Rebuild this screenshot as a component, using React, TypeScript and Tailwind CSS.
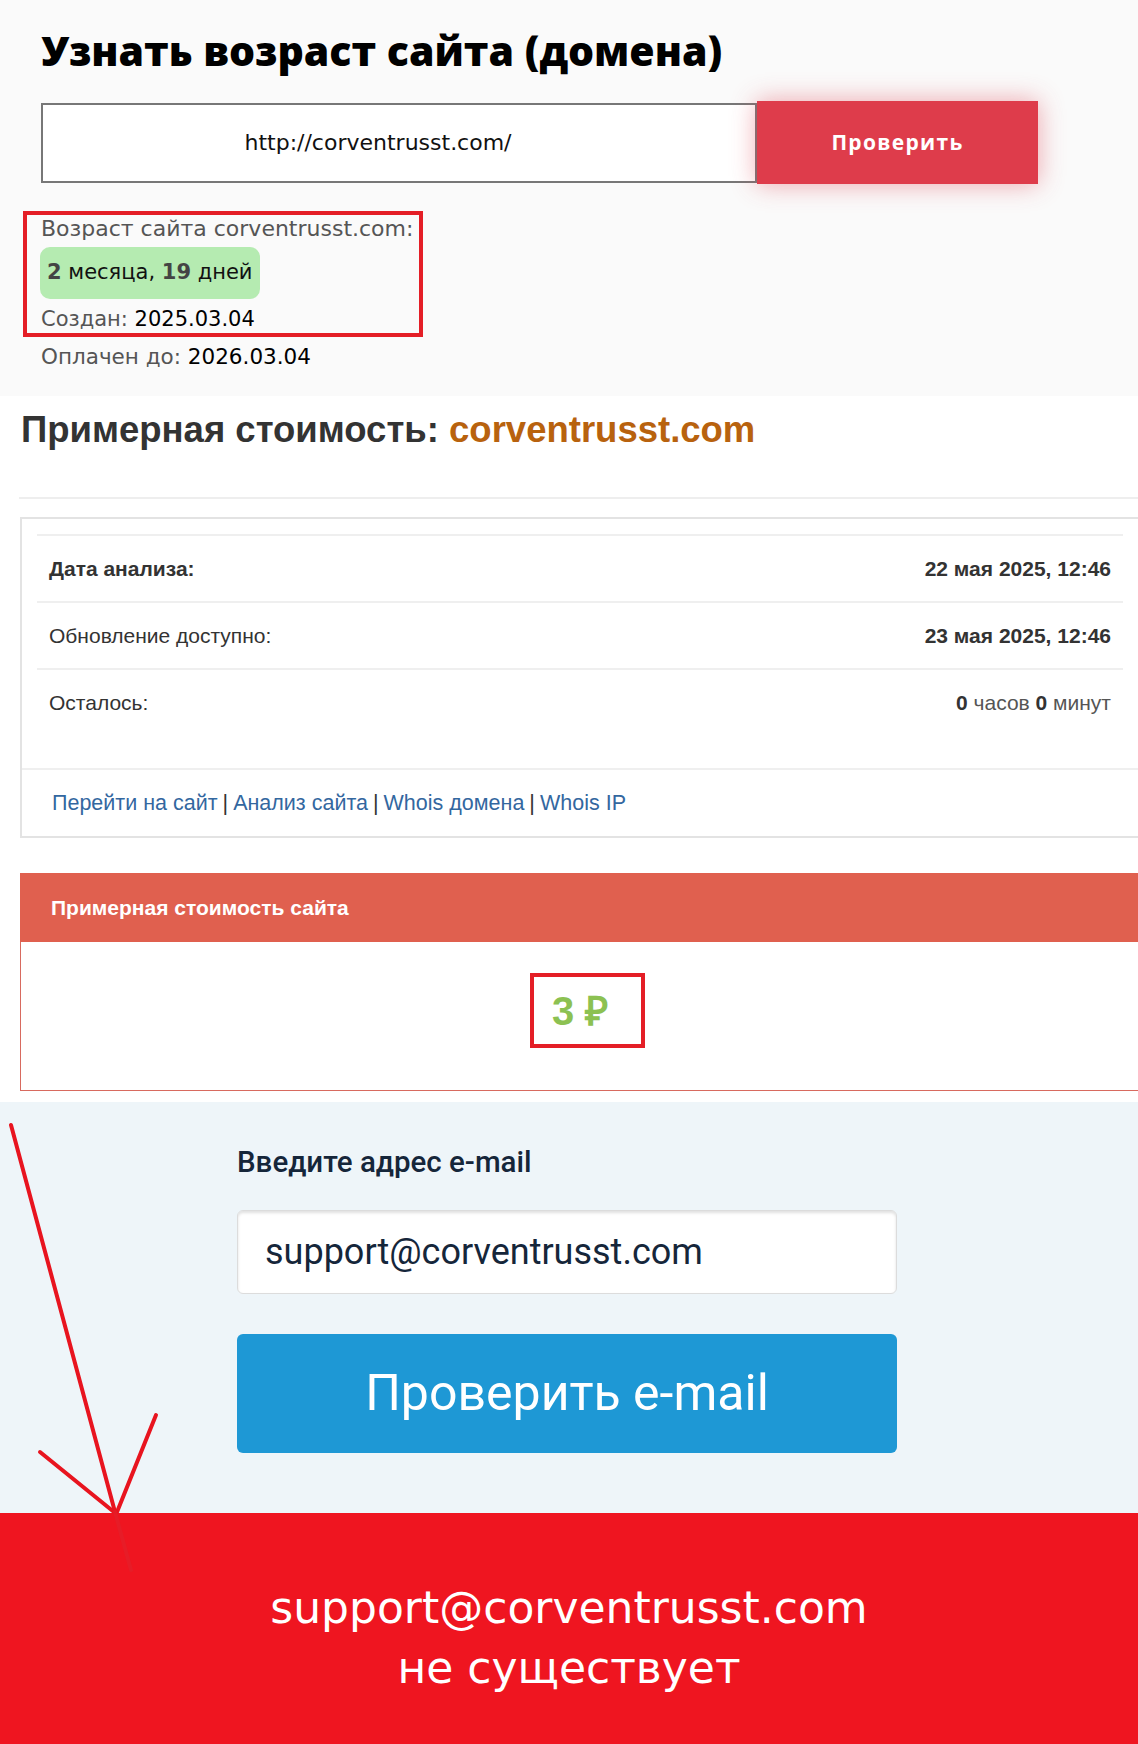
const body = { fontFamily: '"DejaVu Sans", "Noto Sans", sans-serif' };
const head = { fontFamily: '"Open Sans", "Noto Sans", sans-serif' };

function AgeBlock() {
  return (
    <section className="h-[396px] bg-[#fafafa] pl-[41px] pt-[27px]" style={body}>
      <h1 className="text-[41px] font-extrabold leading-[46px] text-black" style={head}>
        Узнать возраст сайта (домена)
      </h1>

      <div className="mt-[28px] flex items-center">
        <div className="flex h-[80px] w-[716px] items-center justify-center border-2 border-[#777] bg-white pr-[42px] text-[22px] text-[#111]">
          http://corventrusst.com/
        </div>
        <button
          className="h-[83px] w-[281px] bg-[#de3c4b] text-[21px] font-bold tracking-[1.3px] text-white shadow-[0_0_24px_rgba(222,60,75,0.45)]"
          style={head}
        >
          Проверить
        </button>
      </div>

      <div className="-ml-[18px] mt-[27px] w-[400px] border-4 border-[#e41e26] pl-[14px] text-[21px]">
        <p className="text-[22px] leading-[28px] text-[#555]">Возраст сайта corventrusst.com:</p>
        <div className="-ml-px mt-[4px] inline-flex h-[52px] items-center rounded-[10px] bg-[#b5ebb1] px-[7px] text-[#111]">
          <b className="font-bold text-[#444]">2</b>&nbsp;месяца,&nbsp;<b className="font-bold text-[#444]">19</b>&nbsp;дней
        </div>
        <p className="mt-[6px] leading-[28px] text-[#555]">
          Создан: <span className="text-black">2025.03.04</span>
        </p>
      </div>
      <p className="mt-[6px] text-[21.5px] leading-[28px] text-[#555]">
        Оплачен до: <span className="text-black">2026.03.04</span>
      </p>
    </section>
  );
}

const rows = [
  { label: "Дата анализа:", bold: true, value: <b>22 мая 2025, 12:46</b> },
  { label: "Обновление доступно:", bold: false, value: <b>23 мая 2025, 12:46</b> },
  {
    label: "Осталось:",
    bold: false,
    value: (
      <>
        <b>0</b> <span className="text-[#555]">часов</span> <b>0</b> <span className="text-[#555]">минут</span>
      </>
    ),
  },
];

function CostBlock() {
  return (
    <section className="bg-white pb-[11px] pt-[12px]" style={{ fontFamily: '"Liberation Sans", Arial, sans-serif' }}>
      <h2 className="pl-[21px] text-[36.5px] font-bold leading-[44px] text-[#333]">
        Примерная стоимость: <span className="text-[#b8620e]">corventrusst.com</span>
      </h2>
      <div className="ml-[19px] mt-[45px] h-[2px] bg-[#eee]" />

      <div className="ml-[20px] mt-[18px] border-y-2 border-l-2 border-[#e3e3e3]">
        <div className="px-[15px] pt-[15px]">
          {rows.map((r) => (
            <div
              key={r.label}
              className="flex h-[67px] items-center justify-between border-t-2 border-[#efefef] pl-[12px] pr-[12px] text-[21px] text-[#333]"
            >
              <span className={r.bold ? "font-bold" : ""}>{r.label}</span>
              <span className="text-[#333]">{r.value}</span>
            </div>
          ))}
        </div>
        <div className="mt-[33px] flex h-[68px] items-center border-t-2 border-[#efefef] pl-[30px] text-[21.5px] text-[#33679f]">
          <span>Перейти на сайт</span>
          <span className="px-[5px] text-[#333]">|</span>
          <span>Анализ сайта</span>
          <span className="px-[5px] text-[#333]">|</span>
          <span>Whois домена</span>
          <span className="px-[5px] text-[#333]">|</span>
          <span>Whois IP</span>
        </div>
      </div>

      <div className="ml-[20px] mt-[35px]">
        <div className="flex h-[69px] items-center bg-[#e0604f] pl-[31px] text-[21px] font-bold text-white">
          Примерная стоимость сайта
        </div>
        <div className="flex h-[149px] justify-center border-b border-l border-[#d86a5f] bg-white pt-[31px]">
          <div className="ml-[16px] flex h-[75px] w-[115px] items-center border-4 border-[#e41e26] pl-[18px] text-[40px] font-bold text-[#8cc152]">
            3 ₽
          </div>
        </div>
      </div>
    </section>
  );
}

function EmailBlock() {
  return (
    <section className="h-[411px] bg-[#eef5f9] pl-[237px] pt-[42px]" style={{ fontFamily: 'Roboto, "Noto Sans", sans-serif' }}>
      <p className="text-[29.5px] font-medium leading-[36px] text-[#15263a]">Введите адрес e-mail</p>
      <div className="mt-[30px] flex h-[84px] w-[660px] items-center rounded-[6px] border border-[#dcdcdc] bg-white pl-[27px] text-[36px] text-[#15263a] shadow-[inset_0_2px_3px_rgba(0,0,0,0.12)]">
        support@corventrusst.com
      </div>
      <button className="mt-[40px] h-[119px] w-[660px] rounded-[6px] bg-[#1e98d5] text-[50px] text-white">
        Проверить e-mail
      </button>
    </section>
  );
}

function ResultBlock() {
  return (
    <section
      className="flex h-[231px] flex-col items-center bg-[#ef1520] pt-[67px] text-white"
      style={{ fontFamily: '"DejaVu Sans", "Noto Sans", sans-serif' }}
    >
      <p className="text-[44px] leading-[56px]">support@corventrusst.com</p>
      <p className="mt-[4px] text-[44px] leading-[56px]">не существует</p>
    </section>
  );
}

function Arrow() {
  return (
    <svg className="pointer-events-none absolute left-0 top-0" width="1138" height="1744" viewBox="0 0 1138 1744">
      <g stroke="#e8141f" strokeWidth="4" strokeLinecap="round" fill="none">
        <path d="M11 1125 L115 1512" />
        <path d="M40 1452 L114 1512" />
        <path d="M156 1415 L117 1512" />
      </g>
      <path d="M115 1512 L131 1570" stroke="#e4202a" strokeWidth="4" strokeLinecap="round" opacity="0.7" />
    </svg>
  );
}

export default function App() {
  return (
    <div className="relative h-[1744px] w-[1138px] overflow-hidden bg-white">
      <AgeBlock />
      <CostBlock />
      <EmailBlock />
      <ResultBlock />
      <Arrow />
    </div>
  );
}
